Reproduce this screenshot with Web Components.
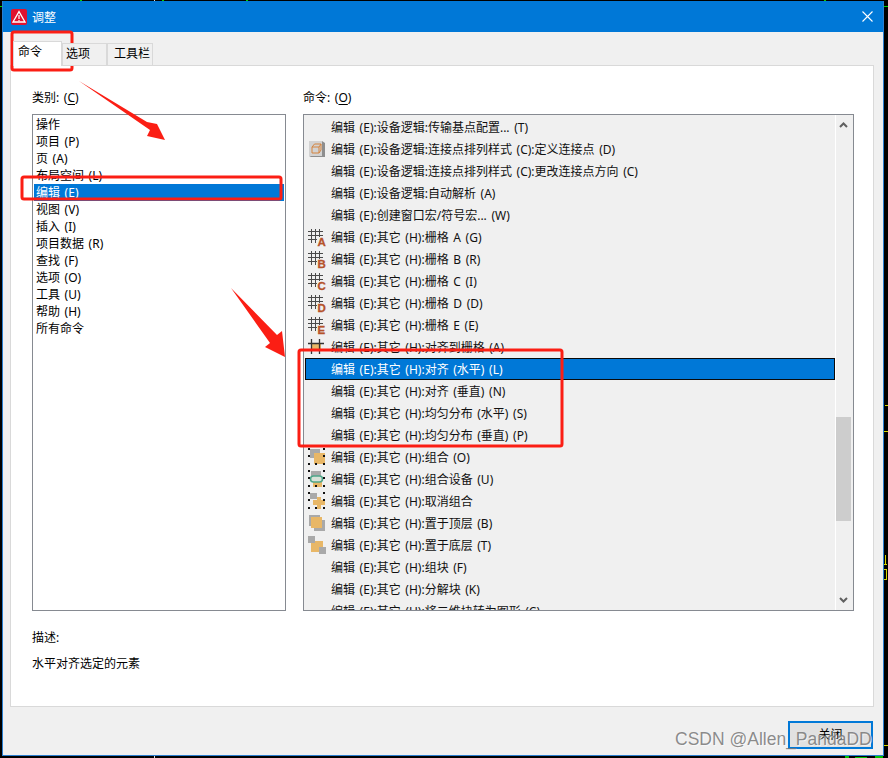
<!DOCTYPE html>
<html lang="zh">
<head>
<meta charset="utf-8">
<title>调整</title>
<style>
  html, body { margin: 0; background: #000; }
  body { width: 888px; height: 758px; overflow: hidden; position: relative; font: 12px "Noto Sans", "Noto Sans CJK SC", sans-serif; color: #000; word-spacing: 1.5px; }
</style>
</head>
<body>
<cad-backdrop></cad-backdrop>
<cad-dialog heading="调整">
  <dlg-tab slot="tabs" active>命令</dlg-tab>
  <dlg-tab slot="tabs">选项</dlg-tab>
  <dlg-tab slot="tabs" wide>工具栏</dlg-tab>

  <cat-list slot="left">
    <cat-row>操作</cat-row>
    <cat-row>项目 (P)</cat-row>
    <cat-row>页 (A)</cat-row>
    <cat-row>布局空间 (L)</cat-row>
    <cat-row selected>编辑 (E)</cat-row>
    <cat-row>视图 (V)</cat-row>
    <cat-row>插入 (I)</cat-row>
    <cat-row>项目数据 (R)</cat-row>
    <cat-row>查找 (F)</cat-row>
    <cat-row>选项 (O)</cat-row>
    <cat-row>工具 (U)</cat-row>
    <cat-row>帮助 (H)</cat-row>
    <cat-row>所有命令</cat-row>
  </cat-list>

  <cmd-list slot="right">
    <cmd-row>编辑 (E):设备逻辑:传输基点配置... (T)</cmd-row>
    <cmd-row icon="cube">编辑 (E):设备逻辑:连接点排列样式 (C):定义连接点 (D)</cmd-row>
    <cmd-row>编辑 (E):设备逻辑:连接点排列样式 (C):更改连接点方向 (C)</cmd-row>
    <cmd-row>编辑 (E):设备逻辑:自动解析 (A)</cmd-row>
    <cmd-row>编辑 (E):创建窗口宏/符号宏... (W)</cmd-row>
    <cmd-row icon="grid" letter="A">编辑 (E):其它 (H):栅格 A (G)</cmd-row>
    <cmd-row icon="grid" letter="B">编辑 (E):其它 (H):栅格 B (R)</cmd-row>
    <cmd-row icon="grid" letter="C">编辑 (E):其它 (H):栅格 C (I)</cmd-row>
    <cmd-row icon="grid" letter="D">编辑 (E):其它 (H):栅格 D (D)</cmd-row>
    <cmd-row icon="grid" letter="E">编辑 (E):其它 (H):栅格 E (E)</cmd-row>
    <cmd-row icon="snap">编辑 (E):其它 (H):对齐到栅格 (A)</cmd-row>
    <cmd-row selected>编辑 (E):其它 (H):对齐 (水平) (L)</cmd-row>
    <cmd-row>编辑 (E):其它 (H):对齐 (垂直) (N)</cmd-row>
    <cmd-row>编辑 (E):其它 (H):均匀分布 (水平) (S)</cmd-row>
    <cmd-row>编辑 (E):其它 (H):均匀分布 (垂直) (P)</cmd-row>
    <cmd-row icon="group">编辑 (E):其它 (H):组合 (O)</cmd-row>
    <cmd-row icon="groupdev">编辑 (E):其它 (H):组合设备 (U)</cmd-row>
    <cmd-row icon="ungroup">编辑 (E):其它 (H):取消组合</cmd-row>
    <cmd-row icon="front">编辑 (E):其它 (H):置于顶层 (B)</cmd-row>
    <cmd-row icon="back">编辑 (E):其它 (H):置于底层 (T)</cmd-row>
    <cmd-row>编辑 (E):其它 (H):组块 (F)</cmd-row>
    <cmd-row>编辑 (E):其它 (H):分解块 (K)</cmd-row>
    <cmd-row>编辑 (E):其它 (H):将二维块转为图形 (C)</cmd-row>
  </cmd-list>

  <span slot="desc">水平对齐选定的元素</span>
  <dlg-button slot="action">关闭</dlg-button>
</cad-dialog>
<red-marks></red-marks>
<csdn-mark>CSDN @Allen_PandaDD</csdn-mark>

<script>
  // helper, every element is the same shadow + style setup
  function define(name, html, extra) {
    const template = document.createElement('template');
    template.innerHTML = html;
    class El extends HTMLElement {
      constructor() {
        super();
        this.attachShadow({mode: 'open'});
        this.shadowRoot.appendChild(template.content.cloneNode(true));
      }
      connectedCallback() {
        if (extra) extra(this);
      }
    }
    customElements.define(name, El);
  }

  // the CAD drawing that shows round the dialog
  define('cad-backdrop', `
    <style>:host { position: absolute; left: 0; top: 0; width: 888px; height: 758px; display: block; }</style>
    <svg width="888" height="758" shape-rendering="crispEdges">
      <path d="M80 0h2v1h-2zM162 0h2v1h-2zM246 0h2v1h-2zM824 0h2v1h-2zM0 6h2v1H0zM884 6h4v1h-4z" fill="#00d400"/>
      <path d="M154 0h1v1h-1zM154 756h1v2h-1z" fill="#ddd"/>
      <path d="M885 405h3v1h-3zM884 431h4v1h-4zM885 555h1v9h-1zM884 564h3v1h-3zM884 569h3v1h-3zM886 569h1v10h-1zM884 579h3v1h-3z" fill="#d8d800"/>
      <path d="M845 756h4v2h-4zM855 757h12v1h-12zM875 756h8v2h-8z" fill="#00c000"/>
      <path d="M884 745h4v1h-4z" fill="#d8d800"/>
    </svg>`);

  define('cad-dialog', `
    <style>
      :host {
        position: absolute; left: 2px; top: 1px; width: 882px; height: 755px;
        box-sizing: border-box; border: solid #2a7fd0; border-width: 0 1px 1px 1px;
        background: #f0f0f0; display: flex; flex-direction: column;
      }
      .title { height: 31px; flex: none; background: #0078d7; color: #fff; display: flex; align-items: center; padding: 0 10px 0 8px; }
      .title svg.logo { margin-right: 5px; }
      .title span { flex: 1; }
      .tabs { display: flex; align-items: flex-end; height: 34px; padding-left: 10px; flex: none; position: relative; z-index: 1; margin-bottom: -1px; }
      .panel {
        margin: 0 9px 0 7px; height: 642px; flex: none; box-sizing: border-box;
        background: #fff; border: 1px solid #d9d9d9; padding: 0 18px 0 21px;
        display: flex; flex-direction: column;
      }
      .cols { display: flex; gap: 17px; padding-top: 22px; }
      .col-left { width: 254px; flex: none; }
      .col-right { width: 551px; flex: none; }
      .lbl { height: 26px; line-height: 19px; }
      u { text-decoration-thickness: 1px; text-underline-offset: 2px; }
      .desc { padding-top: 17px; line-height: 20px; }
      .desc div + div { margin-top: 6px; }
      .foot { flex: 1; display: flex; justify-content: flex-end; padding: 14px 10px 0 0; }
    </style>
    <div class="title">
      <svg class="logo" width="16" height="16" viewBox="0 0 16 16">
        <rect width="16" height="16" rx="2" fill="#e0122f"/>
        <path d="M8 2.6 14 13H2z" fill="none" stroke="#fff" stroke-width="1.3"/>
        <path d="M8 6v4M8 11v1.2" stroke="#fff" stroke-width="1.2"/>
      </svg>
      <span id="heading"></span>
      <svg width="11" height="11" viewBox="0 0 11 11"><path d="M.5.5l10 10M10.500.5l-10 10" stroke="#fff" stroke-width="1.1"/></svg>
    </div>
    <div class="tabs"><slot name="tabs"></slot></div>
    <div class="panel">
      <div class="cols">
        <div class="col-left">
          <div class="lbl">类别: (<u>C</u>)</div>
          <slot name="left"></slot>
        </div>
        <div class="col-right">
          <div class="lbl">命令: (<u>O</u>)</div>
          <slot name="right"></slot>
        </div>
      </div>
      <div class="desc">
        <div>描述:</div>
        <div><slot name="desc"></slot></div>
      </div>
    </div>
    <div class="foot"><slot name="action"></slot></div>`,
    el => { el.shadowRoot.getElementById('heading').textContent = el.getAttribute('heading'); });

  define('dlg-tab', `
    <style>
      :host { display: block; width: 45px; height: 23px; box-sizing: border-box; border: 1px solid #d9d9d9; background: #f0f0f0; padding-left: 3px; line-height: 20px; }
      :host([active]) { width: 49px; height: 25px; background: #fff; border-bottom: 0; padding-left: 4px; }
      :host([wide]) { width: 46px; padding-left: 6px; white-space: nowrap; }
    </style><slot></slot>`);

  define('cat-list', `
    <style>
      :host { display: block; height: 497px; box-sizing: border-box; border: 1px solid #868a91; background: #fff; padding: 1px; overflow: hidden; }
    </style><slot></slot>`);

  define('cat-row', `
    <style>
      :host { display: block; height: 17px; line-height: 17px; padding-left: 2px; white-space: nowrap; }
      :host([selected]) { background: #0078d7; color: #fff; }
    </style><slot></slot>`);

  define('cmd-list', `
    <style>
      :host { display: flex; height: 497px; box-sizing: border-box; border: 1px solid #868a91; background: #f0f0f0; overflow: hidden; }
      .rows { flex: 1; min-width: 0; padding: 1px 0 0 1px; overflow: hidden; }
      .bar { width: 18px; flex: none; border-left: 1px solid #fff; position: relative; display: flex; flex-direction: column; align-items: center; justify-content: space-between; padding: 7px 2px 7px 0; box-sizing: border-box; }
      .thumb { position: absolute; left: 0; top: 302px; width: 15px; height: 104px; background: #cdcdcd; }
    </style>
    <div class="rows"><slot></slot></div>
    <div class="bar">
      <svg width="9" height="6" viewBox="0 0 9 6"><path d="M1 5l3.5-3.5L8 5" fill="none" stroke="#606060" stroke-width="2"/></svg>
      <div class="thumb"></div>
      <svg width="9" height="6" viewBox="0 0 9 6"><path d="M1 1l3.5 3.5L8 1" fill="none" stroke="#606060" stroke-width="2"/></svg>
    </div>`);

  // three by three lines, the letter box knocks out the lower right corner
  const gridLines = '<path d="M3.500 1v14M7.500 1v14M11.500 1v14M0 3.500h15M0 7.500h15M0 11.500h15" stroke="#4a4a4a" stroke-width="1" fill="none"/><rect x="9" y="9" width="9" height="10" fill="#f0f0f0"/>';
  const dots = '<path d="M0 0h2v2H0zM15 0h2v2h-2zM0 15h2v2H0zM15 15h2v2h-2zM0 7h2v2H0zM15 7h2v2h-2zM7 15h2v2H7z" fill="#111"/>';
  const icons = {
    cube: '<rect x="1" y="1" width="13" height="15" fill="#d2d2d2"/><path d="M14 1l3 2v14H3l-2-1h13z" fill="#8e8e8e"/><path d="M4 7h7v6H4zM4 7l2.500-3H13l-2 3M13 4v6l-2 3" fill="none" stroke="#d5843f"/>',
    snap: '<path d="M4 5h9v8H4z" fill="#e8b767"/><path d="M3.500 1v15M11.500 1v15M0 5.500h16" stroke="#333" stroke-width="1.300" fill="none"/>',
    group: '<rect x="2" y="1" width="10" height="9" fill="#a9a9a9"/><rect x="6" y="5" width="11" height="11" fill="#e8b767"/>' + dots,
    groupdev: '<rect x="3" y="1" width="10" height="6" fill="#a9a9a9"/><rect x="5" y="10" width="9" height="7" fill="#e8b767"/><rect x="2.500" y="6" width="12" height="6" rx="3" fill="#d9e2d8" stroke="#4fa78a" stroke-width="1.600"/>' + dots,
    ungroup: '<rect x="2" y="1" width="7" height="6" fill="#a9a9a9"/><path d="M9 5h4v3h4v5h-4v4H9v-4H5V8h4z" fill="#e8b767"/>' + dots,
    front: '<rect x="1" y="1" width="11" height="11" fill="#a9a9a9"/><rect x="6" y="6" width="11" height="11" fill="#a9a9a9"/><rect x="3" y="3" width="11" height="11" fill="#e8b767"/>',
    back: '<rect x="3" y="5" width="12" height="11" fill="#e8b767"/><rect x="0" y="0" width="7" height="7" fill="#a9a9a9"/><rect x="11" y="11" width="7" height="7" fill="#a9a9a9"/>'
  };

  define('cmd-row', `
    <style>
      :host { display: block; height: 22px; width: 530px; box-sizing: border-box; position: relative; padding-left: 26px; line-height: 23px; white-space: nowrap; color: #111; }
      :host([selected]) { background: #0078d7; color: #fff; outline: 1px solid #0a0a0a; outline-offset: -1px; }
      #icon { position: absolute; left: 3px; top: 2px; display: block; }
      svg { display: block; }
      text { font: bold 11.5px "Liberation Sans", sans-serif; fill: #b5522a; stroke: #b5522a; stroke-width: .3px; }
    </style>
    <span id="icon"></span><slot></slot>`,
    el => {
      const kind = el.getAttribute('icon');
      if (!kind) return;
      let body = icons[kind];
      if (kind === 'grid') {
        // the grid icons only differ by their letter
        body = gridLines + '<text x="9.500" y="18">' + el.getAttribute('letter') + '</text>';
      }
      el.shadowRoot.getElementById('icon').innerHTML = '<svg width="20" height="20" viewBox="0 0 20 20">' + body + '</svg>';
    });

  define('dlg-button', `
    <style>
      :host { display: block; width: 85px; height: 28px; box-sizing: border-box; border: 2px solid #0078d7; background: #e1e1e1; text-align: center; line-height: 24px; }
    </style><slot></slot>`);

  // hand drawn marks somebody put over the screenshot
  define('red-marks', `
    <style>:host { position: absolute; left: 0; top: 0; width: 888px; height: 758px; display: block; pointer-events: none; }</style>
    <svg width="888" height="758" fill="none" stroke="#fb1e14" stroke-width="3">
      <rect x="12" y="32" width="60" height="38" rx="2"/>
      <rect x="22" y="177" width="259" height="22" rx="2"/>
      <rect x="299" y="350" width="263" height="96" rx="2"/>
      <path stroke="none" fill="#fb1e14" d="M79 81 147 122 157 124 165 140 147 136 150 130Z"/>
      <path stroke="none" fill="#fb1e14" d="M231 288 277 335 282 331 285 357 265 347 270 343Z"/>
    </svg>`);

  define('csdn-mark', `
    <style>
      :host { position: absolute; left: 675px; top: 727px; display: block; font: 17.5px/24px "Liberation Sans", sans-serif; word-spacing: 0; color: rgba(120,120,120,.85); text-shadow: 1px 1px 0 rgba(255,255,255,.6); white-space: nowrap; }
    </style><slot></slot>`);
</script>
</body>
</html>
